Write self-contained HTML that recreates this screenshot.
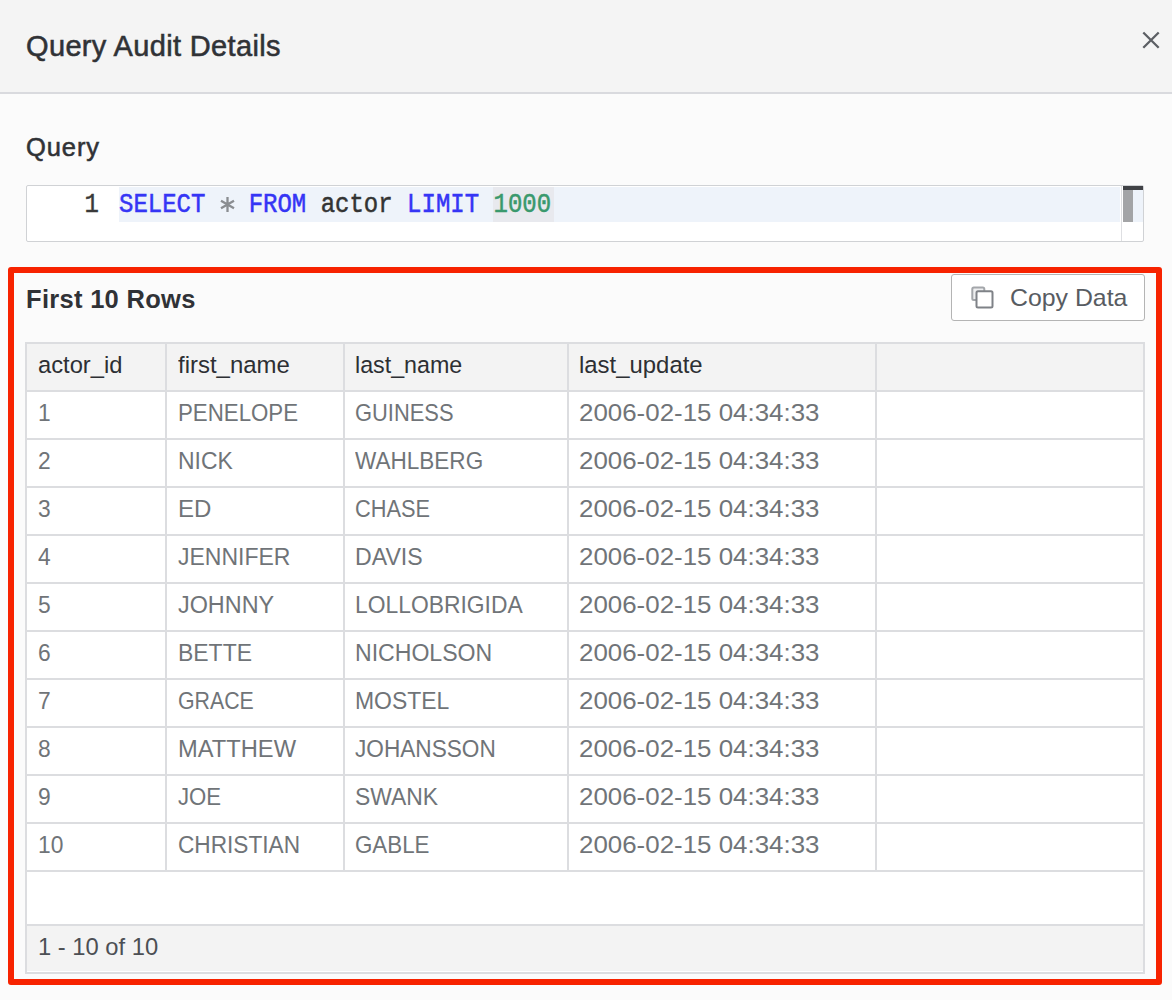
<!DOCTYPE html>
<html><head><meta charset="utf-8">
<style>
html,body{margin:0;padding:0;}
body{width:1172px;height:1000px;overflow:hidden;background:#fbfbfb;position:relative;font-family:"Liberation Sans",sans-serif;color:#2d2f33;}
.abs{position:absolute;}
#hdr{left:0;top:0;width:1172px;height:92px;background:#f4f4f4;border-bottom:2px solid #d9dade;}
.t{position:absolute;white-space:nowrap;line-height:1;}
#title{left:26px;top:32px;font-size:29px;letter-spacing:0.35px;color:#303236;-webkit-text-stroke:0.55px #303236;}
#qlabel{left:26px;top:134.5px;font-size:25.5px;letter-spacing:0.9px;color:#303236;-webkit-text-stroke:0.55px #303236;}
#editor{left:26px;top:185px;width:1116px;height:55px;border:1px solid #d0d2d5;background:#fff;border-radius:2px;}
#hl{left:119px;top:187px;width:1001px;height:35px;background:#eef3fa;}
.mono{font-family:"Liberation Mono",monospace;}
#ln{left:84.5px;top:191px;font-size:24px;color:#3a3a3a;-webkit-text-stroke:0.4px #3a3a3a;transform:scaleY(1.14);transform-origin:0 0;}
#sql{left:119px;top:191px;font-size:24px;color:#333;-webkit-text-stroke:0.45px;transform:scaleY(1.14);transform-origin:0 0;}
.kw{color:#3535f5;}
.num{color:#3a996d;}
.op{color:#888;}
#red{left:8px;top:267px;width:1142px;height:706px;border:6px solid #f72300;border-radius:3px;}
#frows{left:26px;top:286.5px;font-size:25.5px;font-weight:bold;letter-spacing:0.3px;color:#303236;}
#btn{left:951px;top:274px;width:192px;height:45px;border:1px solid #b4b4b4;border-radius:3px;background:#fff;}
#btntxt{left:1010px;top:286px;font-size:24px;color:#585c62;transform:scaleX(1.035);transform-origin:0 0;}
#tbl{left:25px;top:342px;width:1116px;height:628px;border:2px solid #dcdde0;background:#fff;}
.hrow{position:absolute;left:27px;top:344px;width:1116px;height:46px;background:#f3f3f3;}
.hline{position:absolute;left:27px;width:1116px;height:2px;background:#dcdde0;}
.vline{position:absolute;top:344px;width:2px;height:528px;background:#dcdde0;}
.cell{position:absolute;white-space:nowrap;line-height:1;font-size:24.5px;color:#707478;transform-origin:0 0;}
.hcell{color:#2d2f33;transform:scaleX(0.975);}
.cname{transform:scaleX(0.94);}
.cdate{transform:scaleX(1.057);}
.cid{transform:scaleX(0.93);}
.cfoot{color:#4c4f54;transform:scaleX(0.97);}
#foot{left:27px;top:926px;width:1116px;height:45px;background:#f3f3f3;}
</style></head><body>
<div id="hdr" class="abs"></div>
<div id="title" class="t">Query Audit Details</div>
<svg class="abs" style="left:1138px;top:27px" width="26" height="26" viewBox="0 0 26 26"><path d="M5.3 5.5 L20.7 20.7 M20.7 5.5 L5.3 20.7" stroke="#5c5f64" stroke-width="2.3" fill="none"/></svg>

<div id="qlabel" class="t">Query</div>
<div id="editor" class="abs"></div>
<div id="hl" class="abs"></div>
<div id="ln" class="t mono">1</div>
<div class="abs" style="left:1121px;top:186px;width:1px;height:55px;background:#dedfe2"></div><div class="abs" style="left:1133px;top:190px;width:10px;height:32px;background:#eef3fa"></div>
<div class="abs" style="left:1123px;top:186px;width:20px;height:4px;background:#404246"></div>
<div class="abs" style="left:1123px;top:190px;width:10px;height:32px;background:#a3a4a6"></div>
<div class="abs" style="left:493px;top:187px;width:61px;height:35px;background:#e8e9ee"></div>
<svg class="abs" style="left:217px;top:194px" width="21" height="21" viewBox="0 0 21 21"><path d="M10.5 3 V18 M4 6.75 L17 14.25 M4 14.25 L17 6.75" stroke="#8a8d91" stroke-width="2.3" fill="none"/></svg>
<div id="sql" class="t mono"><span class="kw">SELECT</span> <span class="op">&nbsp;</span> <span class="kw">FROM</span> actor <span class="kw">LIMIT</span> <span class="num">1000</span></div>

<div id="frows" class="t">First 10 Rows</div>
<div id="btn" class="abs"></div>
<div id="btntxt" class="t">Copy Data</div>
<svg class="abs" style="left:968px;top:283px" width="30" height="30" viewBox="0 0 30 30"><rect x="4.3" y="4.5" width="12" height="12.5" rx="1.5" stroke="#a3a6aa" stroke-width="2" fill="#eeeff0"/><rect x="8.5" y="8.2" width="16" height="16.3" rx="1.5" stroke="#7f8287" stroke-width="2" fill="#fff"/></svg>

<div id="tbl" class="abs"></div>
<div class="hrow"></div>
<div id="foot" class="abs"></div>
<!--TABLE-->
<div class="hline" style="top:390px"></div>
<div class="hline" style="top:438px"></div>
<div class="hline" style="top:486px"></div>
<div class="hline" style="top:534px"></div>
<div class="hline" style="top:582px"></div>
<div class="hline" style="top:630px"></div>
<div class="hline" style="top:678px"></div>
<div class="hline" style="top:726px"></div>
<div class="hline" style="top:774px"></div>
<div class="hline" style="top:822px"></div>
<div class="hline" style="top:870px"></div>
<div class="hline" style="top:924px"></div>
<div class="vline" style="left:165px"></div>
<div class="vline" style="left:343px"></div>
<div class="vline" style="left:567px"></div>
<div class="vline" style="left:875px"></div>
<div class="cell hcell" style="left:38px;top:352.5px;transform:scaleX(0.969)">actor_id</div>
<div class="cell hcell" style="left:178px;top:352.5px;transform:scaleX(0.978)">first_name</div>
<div class="cell hcell" style="left:355px;top:352.5px;transform:scaleX(0.949)">last_name</div>
<div class="cell hcell" style="left:579px;top:352.5px;transform:scaleX(0.976)">last_update</div>
<div class="cell cid" style="left:38px;top:401px">1</div>
<div class="cell cname" style="left:178px;top:401px;transform:scaleX(0.909)">PENELOPE</div>
<div class="cell cname" style="left:355px;top:401px;transform:scaleX(0.893)">GUINESS</div>
<div class="cell cdate" style="left:579px;top:401px">2006-02-15 04:34:33</div>
<div class="cell cid" style="left:38px;top:449px">2</div>
<div class="cell cname" style="left:178px;top:449px;transform:scaleX(0.936)">NICK</div>
<div class="cell cname" style="left:355px;top:449px;transform:scaleX(0.920)">WAHLBERG</div>
<div class="cell cdate" style="left:579px;top:449px">2006-02-15 04:34:33</div>
<div class="cell cid" style="left:38px;top:497px">3</div>
<div class="cell cname" style="left:178px;top:497px;transform:scaleX(0.980)">ED</div>
<div class="cell cname" style="left:355px;top:497px;transform:scaleX(0.888)">CHASE</div>
<div class="cell cdate" style="left:579px;top:497px">2006-02-15 04:34:33</div>
<div class="cell cid" style="left:38px;top:545px">4</div>
<div class="cell cname" style="left:178px;top:545px;transform:scaleX(0.938)">JENNIFER</div>
<div class="cell cname" style="left:355px;top:545px;transform:scaleX(0.943)">DAVIS</div>
<div class="cell cdate" style="left:579px;top:545px">2006-02-15 04:34:33</div>
<div class="cell cid" style="left:38px;top:593px">5</div>
<div class="cell cname" style="left:178px;top:593px;transform:scaleX(0.954)">JOHNNY</div>
<div class="cell cname" style="left:355px;top:593px;transform:scaleX(0.933)">LOLLOBRIGIDA</div>
<div class="cell cdate" style="left:579px;top:593px">2006-02-15 04:34:33</div>
<div class="cell cid" style="left:38px;top:641px">6</div>
<div class="cell cname" style="left:178px;top:641px;transform:scaleX(0.937)">BETTE</div>
<div class="cell cname" style="left:355px;top:641px;transform:scaleX(0.942)">NICHOLSON</div>
<div class="cell cdate" style="left:579px;top:641px">2006-02-15 04:34:33</div>
<div class="cell cid" style="left:38px;top:689px">7</div>
<div class="cell cname" style="left:178px;top:689px;transform:scaleX(0.870)">GRACE</div>
<div class="cell cname" style="left:355px;top:689px;transform:scaleX(0.936)">MOSTEL</div>
<div class="cell cdate" style="left:579px;top:689px">2006-02-15 04:34:33</div>
<div class="cell cid" style="left:38px;top:737px">8</div>
<div class="cell cname" style="left:178px;top:737px;transform:scaleX(0.967)">MATTHEW</div>
<div class="cell cname" style="left:355px;top:737px;transform:scaleX(0.923)">JOHANSSON</div>
<div class="cell cdate" style="left:579px;top:737px">2006-02-15 04:34:33</div>
<div class="cell cid" style="left:38px;top:785px">9</div>
<div class="cell cname" style="left:178px;top:785px;transform:scaleX(0.904)">JOE</div>
<div class="cell cname" style="left:355px;top:785px;transform:scaleX(0.935)">SWANK</div>
<div class="cell cdate" style="left:579px;top:785px">2006-02-15 04:34:33</div>
<div class="cell cid" style="left:38px;top:833px">10</div>
<div class="cell cname" style="left:178px;top:833px;transform:scaleX(0.924)">CHRISTIAN</div>
<div class="cell cname" style="left:355px;top:833px;transform:scaleX(0.911)">GABLE</div>
<div class="cell cdate" style="left:579px;top:833px">2006-02-15 04:34:33</div>
<div class="cell cfoot" style="left:38px;top:935px">1 - 10 of 10</div>
<!--/TABLE-->
<div id="red" class="abs"></div>
</body></html>
